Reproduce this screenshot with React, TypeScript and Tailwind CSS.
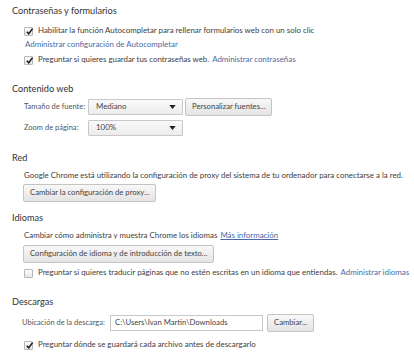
import type { ReactNode } from 'react'

const font = { fontFamily: 'Lato, "Open Sans", sans-serif' }

function Heading({ children, className = '' }: { children: ReactNode; className?: string }) {
  return (
    <div className={`flex h-[14px] items-center pl-[12px] text-[9.2px] text-[#333] ${className}`}>
      {children}
    </div>
  )
}

function Line({ children, className = '' }: { children: ReactNode; className?: string }) {
  return (
    <div className={`flex h-[14px] items-center whitespace-nowrap pl-[24px] text-[7.9px] text-[#3d3d3d] ${className}`}>
      {children}
    </div>
  )
}

function Check({ checked, children, className = '' }: { checked: boolean; children: ReactNode; className?: string }) {
  return (
    <Line className={className}>
      <span className="relative mr-[5px] h-[9px] w-[9px] shrink-0 rounded-[1px] border border-[#b8b8b8] bg-gradient-to-b from-[#fdfdfd] to-[#e8e8e8]">
        {checked && (
          <svg viewBox="0 0 10 10" className="absolute -top-[1px] left-0 h-[9px] w-[9px]">
            <path d="M2 5.2 L4.2 7.6 L8.4 1.8" fill="none" stroke="#222" strokeWidth="1.8" />
          </svg>
        )}
      </span>
      <span>{children}</span>
    </Line>
  )
}

function Button({ children, className = '' }: { children: ReactNode; className?: string }) {
  return (
    <span
      className={`flex h-[18px] items-center whitespace-nowrap rounded-[2px] border border-[#c4c4c4] bg-gradient-to-b from-[#f8f8f8] to-[#e4e4e4] px-[6px] text-[7.7px] text-[#444] ${className}`}
    >
      {children}
    </span>
  )
}

function Select({ value }: { value: string }) {
  return (
    <span className="flex h-[16px] w-[95px] shrink-0 items-center justify-between rounded-[1px] border border-[#c8c8c8] bg-gradient-to-b from-[#fafafa] to-[#ececec] pl-[7px] pr-[6px] text-[7.9px] text-[#444]">
      {value}
      <svg viewBox="0 0 8 5" className="h-[4px] w-[7px]">
        <path d="M0 0 H8 L4 5 Z" fill="#222" />
      </svg>
    </span>
  )
}

const link = 'text-[#4a6aa5]'

export default function App() {
  return (
    <div className="h-[358px] w-[414px] overflow-hidden bg-white" style={font}>
      <div className="flex flex-col">
        <Heading className="mt-[4px]">Contraseñas y formularios</Heading>
        <Check checked className="mt-[6px]">
          Habilitar la función Autocompletar para rellenar formularios web con un solo clic
        </Check>
        <Line className="pl-[25px]">
          <span className={link}>Administrar configuración de Autocompletar</span>
        </Line>
        <Check checked className="mt-[1px]">
          Preguntar si quieres guardar tus contraseñas web. <span className={`ml-[1px] ${link}`}>Administrar contraseñas</span>
        </Check>

        <Heading className="mt-[15px]">Contenido web</Heading>
        <div className="mt-[3px] flex h-[16px] items-center whitespace-nowrap pl-[24px] text-[7.5px] text-[#555]">
          <span className="w-[64px] shrink-0">Tamaño de fuente:</span>
          <Select value="Mediano" />
          <Button className="ml-[2px] h-[17px] px-[3px]">Personalizar fuentes...</Button>
        </div>
        <div className="mt-[5px] flex h-[16px] items-center whitespace-nowrap pl-[24px] text-[7.5px] text-[#555]">
          <span className="w-[64px] shrink-0">Zoom de página:</span>
          <Select value="100%" />
        </div>

        <Heading className="mt-[15px]">Red</Heading>
        <Line className="mt-[4px]">
          Google Chrome está utilizando la configuración de proxy del sistema de tu ordenador para conectarse a la red.
        </Line>
        <div className="mt-[1px] flex pl-[23px]">
          <Button>Cambiar la configuración de proxy...</Button>
        </div>

        <Heading className="mt-[9px]">Idiomas</Heading>
        <Line className="mt-[4px]">
          Cambiar cómo administra y muestra Chrome los idiomas
          <span className={`ml-[3px] underline ${link}`}>Más información</span>
        </Line>
        <div className="mt-[2px] flex pl-[23px]">
          <Button>Configuración de idioma y de introducción de texto...</Button>
        </div>
        <Check checked={false} className="mt-[3px]">
          Preguntar si quieres traducir páginas que no estén escritas en un idioma que entiendas.
          <span className={`ml-[3px] ${link}`}>Administrar idiomas</span>
        </Check>

        <Heading className="mt-[15px]">Descargas</Heading>
        <div className="mt-[6px] flex h-[16px] items-center whitespace-nowrap pl-[22px] text-[7.5px] text-[#555]">
          <span className="w-[88px] shrink-0">Ubicación de la descarga:</span>
          <span className="flex h-[16px] w-[153px] items-center border border-[#c8c8c8] bg-white pl-[4px] text-[7.7px] text-[#444]">
            C:\Users\Ivan Martin\Downloads
          </span>
          <Button className="ml-[4px] h-[17px] px-[5px]">Cambiar...</Button>
        </div>
        <Check checked className="mt-[7px]">
          Preguntar dónde se guardará cada archivo antes de descargarlo
        </Check>
      </div>
    </div>
  )
}
